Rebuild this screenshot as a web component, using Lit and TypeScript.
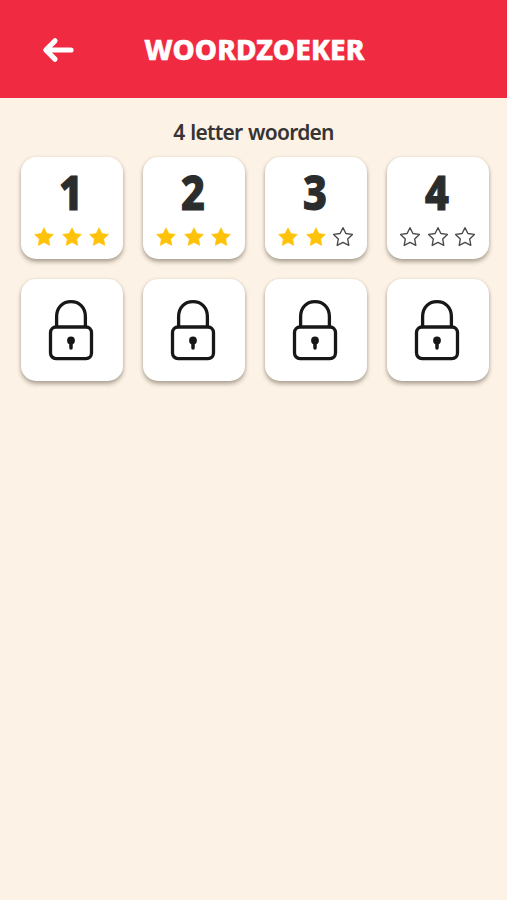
import { LitElement, html, css, svg } from "lit";
import { customElement, property } from "lit/decorators.js";

const STAR = "M11 1.7 L13.9 7.5 L20.4 8.4 L15.7 13 L16.8 19.4 L11 16.4 L5.2 19.4 L6.3 13 L1.6 8.4 L8.1 7.5 Z";

@customElement("level-card")
export class LevelCard extends LitElement {
  @property({ type: Number }) level = 0;
  @property({ type: Number }) stars = 0;
  @property({ type: Boolean }) locked = false;

  static styles = css`
    :host {
      display: flex;
      flex-direction: column;
      align-items: center;
      box-sizing: border-box;
      height: 102px;
      border-radius: 15px;
      background: #fff;
      box-shadow: 0 3px 4px rgba(70, 60, 45, 0.42), 0 0 3px rgba(100, 85, 60, 0.12);
    }
    .number {
      margin-top: 9px;
      margin-right: 1px;
      height: 52px;
      line-height: 52px;
      font-size: 48px;
      font-weight: 800;
      color: #2b2d2d;
      -webkit-text-stroke: 1.2px #2b2d2d;
      transform: scaleX(0.86);
    }
    .stars {
      display: flex;
      gap: 5.6px;
      margin-top: 8px;
    }
    .star {
      display: block;
      width: 22px;
      height: 22px;
    }
    .full {
      fill: #ffc20a;
      stroke: #ffc20a;
      stroke-width: 0.6;
      stroke-linejoin: round;
    }
    .empty {
      fill: #fff;
      stroke: #4a4a4c;
      stroke-width: 1.4;
      stroke-linejoin: round;
    }
    .lock {
      display: block;
      width: 46px;
      height: 62px;
      margin-top: 20px;
      margin-right: 1px;
    }
  `;

  render() {
    if (this.locked) {
      return html`<svg class="lock" viewBox="0 0 46 62" fill="none" stroke="#171717" stroke-width="3.3">
        <path d="M8.6 27.5 V17.7 C8.6 8 15 2.7 23 2.7 S37.4 8 37.4 17.7 V27.5" />
        <rect x="2.5" y="28" width="41" height="31.6" rx="5.5" />
        <circle cx="23" cy="41.5" r="3.9" fill="#171717" stroke="none" />
        <path d="M23 42.5 V49" stroke-width="3.5" stroke-linecap="round" />
      </svg>`;
    }
    return html`
      <div class="number">${this.level}</div>
      <div class="stars">
        ${[0, 1, 2].map(
          (i) => html`<svg class="star" viewBox="0 0 22 22">
            ${svg`<path class=${i < this.stars ? "full" : "empty"} d=${STAR} />`}
          </svg>`
        )}
      </div>
    `;
  }
}

@customElement("app-root")
export class AppRoot extends LitElement {
  static styles = css`
    :host {
      display: block;
      min-height: 900px;
      background: #fcf2e5;
      font-family: "Noto Sans", sans-serif;
    }
    header {
      display: grid;
      grid-template-columns: 1fr auto 1fr;
      align-items: center;
      box-sizing: border-box;
      height: 98.4px;
      padding: 0 40px 0 42px;
      background: #f02a40;
    }
    .back {
      display: block;
      width: 34px;
      height: 26px;
      margin: 1px 0 0 -1px;
    }
    h1 {
      margin: 0;
      font-size: 28px;
      line-height: 40px;
      font-weight: 800;
      letter-spacing: 0.15px;
      color: #fff;
      -webkit-text-stroke: 0.6px #fff;
      white-space: nowrap;
    }
    h2 {
      margin: 0;
      padding-top: 18.5px;
      height: 40.5px;
      line-height: 30px;
      text-align: center;
      font-size: 21px;
      font-weight: 600;
      letter-spacing: -0.75px;
      word-spacing: 1px;
      color: #373433;
    }
    .grid {
      display: grid;
      grid-template-columns: repeat(4, 102px);
      gap: 20px;
      padding-left: 20.5px;
    }
  `;

  render() {
    return html`
      <header>
        <svg class="back" viewBox="0 0 34 26" fill="none" stroke="#fff" stroke-width="5.2" stroke-linecap="round" stroke-linejoin="round">
          <path d="M14 3.8 L4.8 13 L14 22.2 M5.5 13 H30" />
        </svg>
        <h1>WOORDZOEKER</h1>
      </header>
      <h2>4 letter woorden</h2>
      <div class="grid">
        ${[3, 3, 2, 0].map((stars, i) => html`<level-card .level=${i + 1} .stars=${stars}></level-card>`)}
        ${[5, 6, 7, 8].map((n) => html`<level-card .level=${n} .locked=${true}></level-card>`)}
      </div>
    `;
  }
}
